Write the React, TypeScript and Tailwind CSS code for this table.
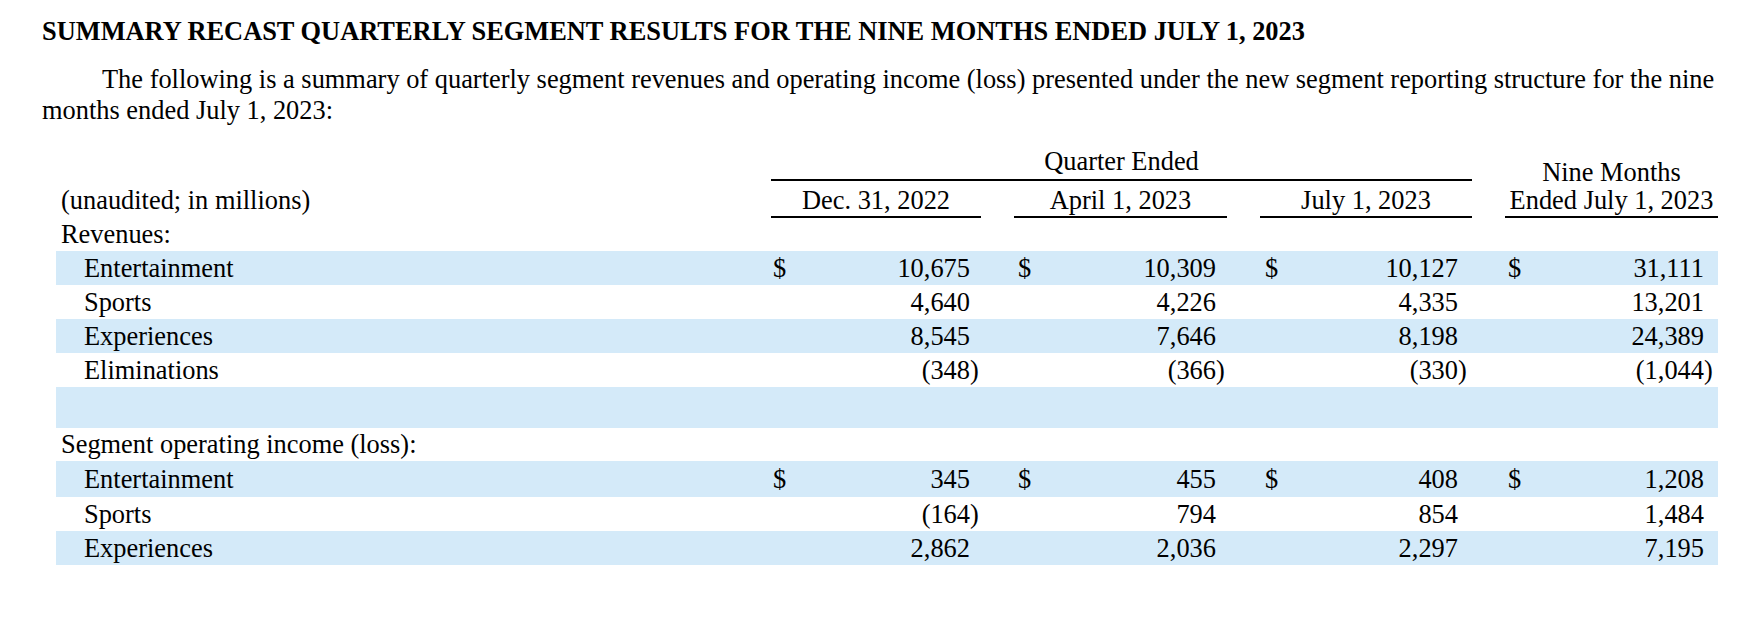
import React from "react";

const GRID = "grid grid-cols-[715px_210px_33px_213px_33px_212px_33px_213px]";

const colPad = [
  "flex justify-between pl-[2px] pr-[2px]",
  "flex justify-between pl-[4px] pr-[2px]",
  "flex justify-between pl-[5px] pr-[5px]",
  "flex justify-between pl-[3px] pr-[5px]",
];
const colStart = ["col-start-2", "col-start-4", "col-start-6", "col-start-8"];

type Row = { label: string; values: string[]; dollar?: boolean; bg?: boolean; tall?: boolean };

const revenues: Row[] = [
  { label: "Entertainment", values: ["10,675", "10,309", "10,127", "31,111"], dollar: true, bg: true },
  { label: "Sports", values: ["4,640", "4,226", "4,335", "13,201"] },
  { label: "Experiences", values: ["8,545", "7,646", "8,198", "24,389"], bg: true },
  { label: "Eliminations", values: ["(348)", "(366)", "(330)", "(1,044)"] },
];

const income: Row[] = [
  { label: "Entertainment", values: ["345", "455", "408", "1,208"], dollar: true, bg: true, tall: true },
  { label: "Sports", values: ["(164)", "794", "854", "1,484"] },
  { label: "Experiences", values: ["2,862", "2,036", "2,297", "7,195"], bg: true },
];

function Value({ v, dollar, i }: { v: string; dollar?: boolean; i: number }) {
  const neg = v.endsWith(")");
  const main = neg ? v.slice(0, -1) : v;
  return (
    <div className={`${colStart[i]} ${colPad[i]}`}>
      <span>{dollar ? "$" : ""}</span>
      <span className="flex">
        <span>{main}</span>
        <span className="w-[9px]">{neg ? ")" : ""}</span>
      </span>
    </div>
  );
}

function DataRow({ row }: { row: Row }) {
  const h = row.tall ? "h-[36px] leading-[36px]" : "h-[34px] leading-[34px]";
  return (
    <div className={row.bg ? `${GRID} ${h} bg-[#d4eaf9]` : `${GRID} ${h}`}>
      <div className="col-start-1 pl-[28px]">{row.label}</div>
      {row.values.map((v, i) => (
        <Value key={i} v={v} dollar={row.dollar} i={i} />
      ))}
    </div>
  );
}

export default function App() {
  return (
    <div className="bg-white text-black min-h-[620px] w-[1764px] pt-[16px] pl-[42px] pr-[20px] font-['Liberation_Serif','Times_New_Roman',serif] text-[26.4px]">
      <h1 className="font-bold leading-[30px] text-[26.4px]">
        SUMMARY RECAST QUARTERLY SEGMENT RESULTS FOR THE NINE MONTHS ENDED JULY 1, 2023
      </h1>
      <p className="mt-[18px] leading-[31px] indent-[60px]">
        The following is a summary of quarterly segment revenues and operating income (loss) presented under the new segment reporting structure for the nine months ended July 1, 2023:
      </p>

      <div className="ml-[14px] mt-[20px] w-[1662px]">
        <div className={`${GRID} grid-rows-[35px_37px]`}>
          <div className="col-start-2 col-span-5 row-start-1 border-b-2 border-black text-center leading-[30px] pb-[3px]">
            Quarter Ended
          </div>
          <div className="col-start-8 row-start-1 row-span-2 border-b-2 border-black text-center leading-[28px] flex flex-col justify-end pb-[2px]">
            <span>Nine Months</span>
            <span>Ended July 1, 2023</span>
          </div>
          <div className="col-start-1 row-start-2 pl-[5px] leading-[30px] pt-[4px]">
            (unaudited; in millions)
          </div>
          <div className="col-start-2 row-start-2 border-b-2 border-black text-center leading-[30px] pt-[4px]">
            Dec. 31, 2022
          </div>
          <div className="col-start-4 row-start-2 border-b-2 border-black text-center leading-[30px] pt-[4px]">
            April 1, 2023
          </div>
          <div className="col-start-6 row-start-2 border-b-2 border-black text-center leading-[30px] pt-[4px]">
            July 1, 2023
          </div>
        </div>

        <div className="h-[33px] leading-[33px] pl-[5px]">Revenues:</div>
        {revenues.map((r) => (
          <DataRow key={"r" + r.label} row={r} />
        ))}
        <div className="h-[41px] bg-[#d4eaf9]" />
        <div className="h-[33px] leading-[33px] pl-[5px]">Segment operating income (loss):</div>
        {income.map((r) => (
          <DataRow key={"i" + r.label} row={r} />
        ))}
      </div>
    </div>
  );
}
